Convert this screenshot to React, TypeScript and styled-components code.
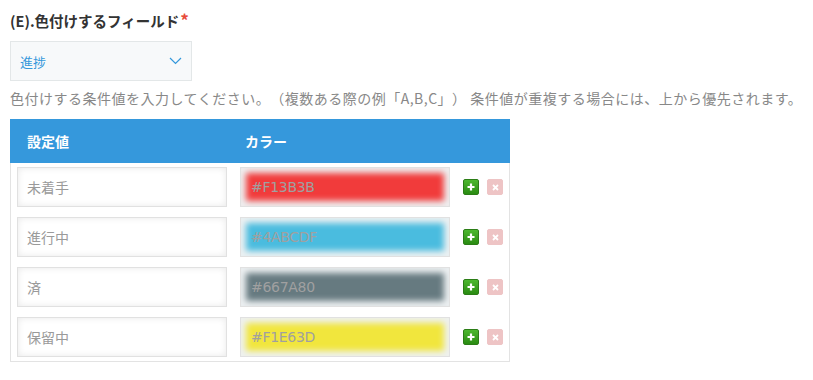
import React from 'react';
import styled, { createGlobalStyle } from 'styled-components';

// ========== Data ==========

type Rule = { value: string; color: string };

const RULES: Rule[] = [
  { value: '未着手', color: '#F13B3B' },
  { value: '進行中', color: '#4ABCDF' },
  { value: '済', color: '#667A80' },
  { value: '保留中', color: '#F1E63D' },
];

// ========== Styled Components ==========

const GlobalStyle = createGlobalStyle`
  body {
    margin: 0;
    background: #fff;
    font-family: "Noto Sans CJK JP", "Noto Sans", sans-serif;
    text-spacing-trim: space-all;
  }
`;

const Page = styled.div`
  padding: 9px 10px;
  width: 813px;
  height: 380px;
  box-sizing: border-box;
`;

const Title = styled.div`
  font-size: 14.5px;
  font-weight: bold;
  color: #333;
  line-height: 22px;
`;

const Required = styled.span`
  color: #e74c3c;
  font-size: 17px;
  margin-left: 1px;
`;

const Select = styled.div`
  margin-top: 9px;
  width: 182px;
  height: 40px;
  box-sizing: border-box;
  border: 1px solid #e3e7e8;
  background: #f7f9fa;
  display: flex;
  align-items: center;
  justify-content: space-between;
  padding: 0 9px 0 9px;
  color: #3498db;
  font-size: 13px;
`;

const Help = styled.div`
  margin-top: 7px;
  font-size: 14px;
  color: #888;
  line-height: 20px;
  letter-spacing: 0.5px;
  white-space: nowrap;
`;

const Table = styled.div`
  margin-top: 11px;
  width: 500px;
`;

const Header = styled.div`
  height: 44px;
  background: #3598dc;
  display: grid;
  grid-template-columns: 218px 1fr;
  align-items: center;
  padding-left: 17px;
  color: #fff;
  font-weight: bold;
  font-size: 14px;
`;

const Body = styled.div`
  border: 1px solid #e3e3e3;
  border-top: none;
  padding: 4px 0 4px 6px;
  display: flex;
  flex-direction: column;
  gap: 10px;
`;

const Row = styled.div`
  display: flex;
  align-items: center;
  height: 40px;
`;

const TextInput = styled.div`
  width: 210px;
  height: 40px;
  box-sizing: border-box;
  border: 1px solid #e1e1e1;
  background: #fff;
  box-shadow: inset 0 0 7px rgba(0, 0, 0, 0.09);
  display: flex;
  align-items: center;
  padding-left: 9px;
  color: #9a9a9a;
  font-size: 14px;
`;

const ColorInput = styled.div<{ $color: string }>`
  margin-left: 13px;
  width: 210px;
  height: 40px;
  box-sizing: border-box;
  border: 1px solid #e1e1e1;
  background: ${(p) => p.$color};
  box-shadow: inset 0 0 6px 5px #eef1f2;
  display: flex;
  align-items: center;
  padding-left: 10px;
  color: #a0a0a0;
  font-size: 14px;
  font-family: "DejaVu Sans", sans-serif;
  letter-spacing: -0.3px;
`;

const IconButton = styled.div<{ $kind: 'add' | 'remove' }>`
  width: 16px;
  height: 16px;
  box-sizing: border-box;
  border-radius: 2px;
  display: flex;
  align-items: center;
  justify-content: center;
  margin-left: ${(p) => (p.$kind === 'add' ? '13px' : '8px')};
  background: ${(p) =>
    p.$kind === 'add' ? 'linear-gradient(#4cb82e, #2a8b12)' : '#eec4c5'};
  border: 1px solid ${(p) => (p.$kind === 'add' ? '#2b7d16' : '#eec4c5')};
`;

// ========== Components ==========

function Chevron() {
  return (
    <svg width="13" height="8" viewBox="0 0 13 8">
      <path d="M1 1 L6.5 6.5 L12 1" fill="none" stroke="#3498db" strokeWidth="1.2" />
    </svg>
  );
}

function PlusIcon() {
  return (
    <svg width="8" height="8" viewBox="0 0 8 8">
      <path d="M4 0.5 V7.5 M0.5 4 H7.5" stroke="#fff" strokeWidth="2.2" />
    </svg>
  );
}

function CrossIcon() {
  return (
    <svg width="7" height="7" viewBox="0 0 7 7">
      <path d="M1 1 L6 6 M6 1 L1 6" stroke="#fff" strokeWidth="1.8" />
    </svg>
  );
}

function RuleRow({ rule }: { rule: Rule }) {
  return (
    <Row>
      <TextInput>{rule.value}</TextInput>
      <ColorInput $color={rule.color}>{rule.color}</ColorInput>
      <IconButton $kind="add">
        <PlusIcon />
      </IconButton>
      <IconButton $kind="remove">
        <CrossIcon />
      </IconButton>
    </Row>
  );
}

// ========== Page ==========

export default function App() {
  return (
    <Page>
      <GlobalStyle />
      <Title>
        (E).色付けするフィールド<Required>*</Required>
      </Title>
      <Select>
        <span>進捗</span>
        <Chevron />
      </Select>
      <Help>
        色付けする条件値を入力してください。（複数ある際の例「A,B,C」） 条件値が重複する場合には、上から優先されます。
      </Help>
      <Table>
        <Header>
          <span>設定値</span>
          <span>カラー</span>
        </Header>
        <Body>
          {RULES.map((rule) => (
            <RuleRow key={rule.value} rule={rule} />
          ))}
        </Body>
      </Table>
    </Page>
  );
}
